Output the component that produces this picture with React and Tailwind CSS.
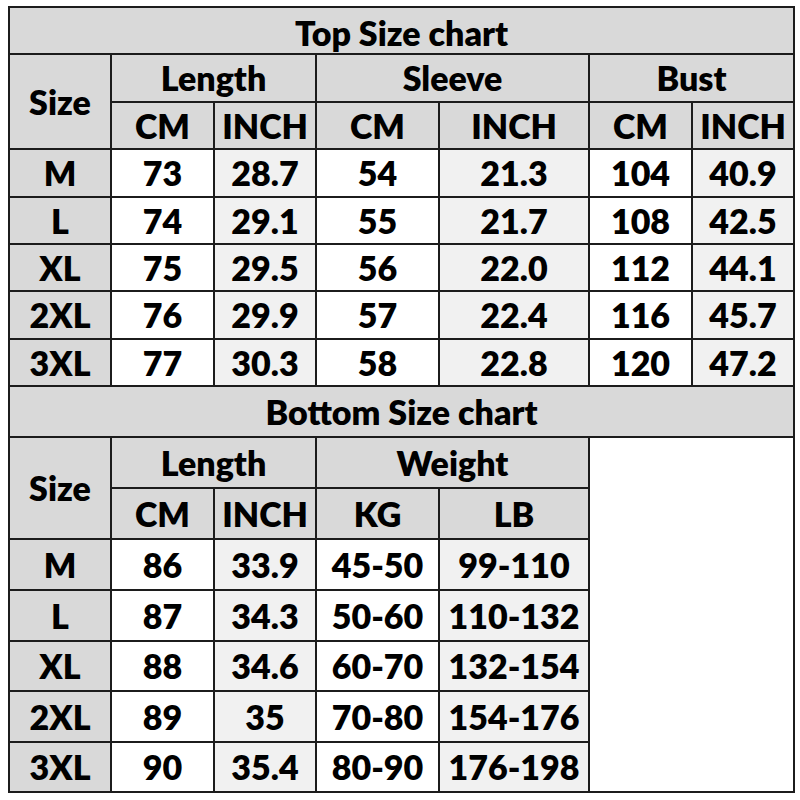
import React from 'react';

const topRows = [
    ['M', '73', '28.7', '54', '21.3', '104', '40.9'],
    ['L', '74', '29.1', '55', '21.7', '108', '42.5'],
    ['XL', '75', '29.5', '56', '22.0', '112', '44.1'],
    ['2XL', '76', '29.9', '57', '22.4', '116', '45.7'],
    ['3XL', '77', '30.3', '58', '22.8', '120', '47.2'],
];
const topHeights = ['h-[48px]', 'h-[47px]', 'h-[47px]', 'h-[48px]', 'h-[47px]'];

const bottomRows = [
    ['M', '86', '33.9', '45-50', '99-110'],
    ['L', '87', '34.3', '50-60', '110-132'],
    ['XL', '88', '34.6', '60-70', '132-154'],
    ['2XL', '89', '35', '70-80', '154-176'],
    ['3XL', '90', '35.4', '80-90', '176-198'],
];
const bottomHeights = ['h-[51px]', 'h-[51px]', 'h-[50px]', 'h-[51px]', 'h-[50px]'];

// grey = header, soft = the lighter "INCH"/"LB" columns
const cell = 'border-2 border-[#1c1c1c] text-center align-middle p-0 leading-none';
const grey = `${cell} bg-[#d9d9d9]`;
const white = `${cell} bg-white`;
const soft = `${cell} bg-[#f1f1f1]`;

const App = () => {
    return (
        <div className="w-[800px] h-[800px] bg-white pt-[6px] pl-2 text-black text-[34px] font-extrabold" style={{ fontFamily: 'Lato, "Open Sans", sans-serif' }}>
            <table className="table-fixed border-collapse w-[785px]">
                <colgroup>
                    <col className="w-[102px]" />
                    <col className="w-[103px]" />
                    <col className="w-[102px]" />
                    <col className="w-[123px]" />
                    <col className="w-[150px]" />
                    <col className="w-[103px]" />
                    <col className="w-[102px]" />
                </colgroup>
                <tbody>
                    {/* 上衣 */}
                    <tr className="h-[47px]">
                        <td colSpan="7" className={`${grey} pt-1`}>Top Size chart</td>
                    </tr>
                    <tr className="h-[48px]">
                        <td rowSpan="2" className={grey}>Size</td>
                        <td colSpan="2" className={grey}>Length</td>
                        <td colSpan="2" className={grey}>Sleeve</td>
                        <td colSpan="2" className={grey}>Bust</td>
                    </tr>
                    <tr className="h-[47px]">
                        <td className={grey}>CM</td>
                        <td className={grey}>INCH</td>
                        <td className={grey}>CM</td>
                        <td className={grey}>INCH</td>
                        <td className={grey}>CM</td>
                        <td className={grey}>INCH</td>
                    </tr>
                    {topRows.map((r, i) => (
                        <tr key={r[0]} className={topHeights[i]}>
                            <td className={grey}>{r[0]}</td>
                            <td className={white}>{r[1]}</td>
                            <td className={soft}>{r[2]}</td>
                            <td className={white}>{r[3]}</td>
                            <td className={soft}>{r[4]}</td>
                            <td className={white}>{r[5]}</td>
                            <td className={soft}>{r[6]}</td>
                        </tr>
                    ))}

                    {/* 下身 */}
                    <tr className="h-[51px]">
                        <td colSpan="7" className={grey}>Bottom Size chart</td>
                    </tr>
                    <tr className="h-[51px]">
                        <td rowSpan="2" className={grey}>Size</td>
                        <td colSpan="2" className={grey}>Length</td>
                        <td colSpan="2" className={grey}>Weight</td>
                        <td colSpan="2" rowSpan="7" className={white}></td>
                    </tr>
                    <tr className="h-[51px]">
                        <td className={grey}>CM</td>
                        <td className={grey}>INCH</td>
                        <td className={grey}>KG</td>
                        <td className={grey}>LB</td>
                    </tr>
                    {bottomRows.map((r, i) => (
                        <tr key={r[0]} className={bottomHeights[i]}>
                            <td className={grey}>{r[0]}</td>
                            <td className={white}>{r[1]}</td>
                            <td className={soft}>{r[2]}</td>
                            <td className={white}>{r[3]}</td>
                            <td className={soft}>{r[4]}</td>
                        </tr>
                    ))}
                </tbody>
            </table>
        </div>
    );
};

export default App;
